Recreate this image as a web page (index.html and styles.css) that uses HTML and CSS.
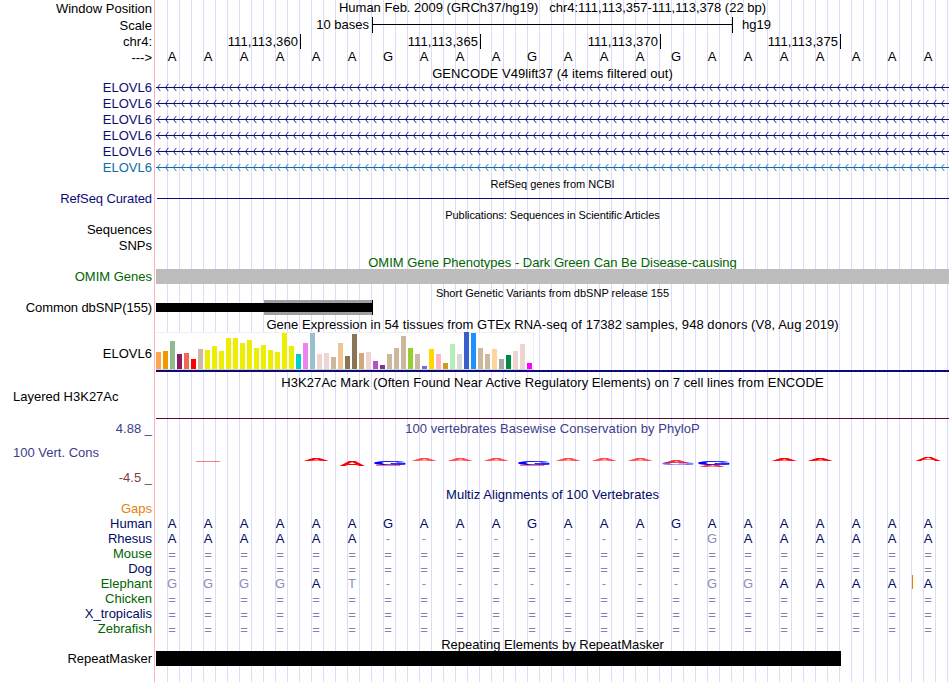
FILE: index.html
```html
<!DOCTYPE html>
<html lang="en">
<head>
<meta charset="utf-8">
<title>Genome Browser</title>
<link rel="stylesheet" href="styles.css">
</head>
<body>
<main class="browser">
  <div class="labels">
    <div class="label gap-1">Window Position</div>
    <div class="label gap-2">Scale</div>
    <div class="label gap-1">chr4:</div>
    <div class="label gap-1">---&gt;</div>
    <div class="genes">
      <div class="label navy">ELOVL6</div>
      <div class="label navy">ELOVL6</div>
      <div class="label navy">ELOVL6</div>
      <div class="label navy">ELOVL6</div>
      <div class="label navy">ELOVL6</div>
      <div class="label blue">ELOVL6</div>
    </div>
    <div class="label navy condensed gap-refseq">RefSeq Curated</div>
    <div class="label gap-16">Sequences</div>
    <div class="label gap-1">SNPs</div>
    <div class="label green gap-16">OMIM Genes</div>
    <div class="label condensed gap-16">Common dbSNP(155)</div>
    <div class="label gap-gtex">ELOVL6</div>
    <div class="label left gap-layered">Layered H3K27Ac</div>
    <div class="label indigo gap-17">4.88 _</div>
    <div class="label indigo left gap-9">100 Vert. Cons</div>
    <div class="label maroon gap-10">-4.5 _</div>
    <div class="label orange gap-16">Gaps</div>
    <div class="label deep">Human</div>
    <div class="label deep">Rhesus</div>
    <div class="label green">Mouse</div>
    <div class="label deep">Dog</div>
    <div class="label green">Elephant</div>
    <div class="label green">Chicken</div>
    <div class="label deep">X_tropicalis</div>
    <div class="label green">Zebrafish</div>
    <div class="label gap-repeat">RepeatMasker</div>
  </div>
  <div class="tracks">
    <div class="title">Human Feb. 2009 (GRCh37/hg19) &nbsp; chr4:111,113,357-111,113,378 (22 bp)</div>
    <div class="scale"><span class="scale-size">10 bases</span><span class="scale-bar"></span><span class="scale-db">hg19</span></div>
    <div class="ruler"><span>111,113,360</span><span>111,113,365</span><span>111,113,370</span><span>111,113,375</span></div>
    <div class="bases" data-seq="AAAAAAGAAAGAAAGAAAAAAA"></div>
    <div class="title spaced gencode-title">GENCODE V49lift37 (4 items filtered out)</div>
    <svg class="transcripts" width="793" height="96">
      <defs>
        <pattern id="chev" x="1" y="-2" width="8" height="16" patternUnits="userSpaceOnUse">
          <path d="M0 8.5H8" stroke="#0c0c78"/><path d="M3.3 5L.5 8.5L3.3 12" fill="none" stroke="#0c0c78" stroke-width=".9"/>
        </pattern>
        <pattern id="chevBlue" x="1" y="-2" width="8" height="16" patternUnits="userSpaceOnUse">
          <path d="M0 8.5H8" stroke="#0c6cac"/><path d="M3.3 5L.5 8.5L3.3 12" fill="none" stroke="#0c6cac" stroke-width=".9"/>
        </pattern>
      </defs>
      <rect width="793" height="78" fill="url(#chev)"/>
      <rect y="78" width="793" height="16" fill="url(#chevBlue)"/>
    </svg>
    <div class="title small refseq-title">RefSeq genes from NCBI</div>
    <div class="refseq-line"></div>
    <div class="title small pubs-title">Publications: Sequences in Scientific Articles</div>
    <div class="title green omim-title">OMIM Gene Phenotypes - Dark Green Can Be Disease-causing</div>
    <div class="omim-bar"></div>
    <div class="title small snp-title">Short Genetic Variants from dbSNP release 155</div>
    <div class="snp"><span class="snp-wide"></span><span class="snp-bar"></span></div>
    <div class="title spaced gtex-title">Gene Expression in 54 tissues from GTEx RNA-seq of 17382 samples, 948 donors (V8, Aug 2019)</div>
    <div class="gtex" id="gtex"></div>
    <div class="gtex-line"></div>
    <div class="title spaced h3k-title">H3K27Ac Mark (Often Found Near Active Regulatory Elements) on 7 cell lines from ENCODE</div>
    <div class="h3k-line"></div>
    <div class="title indigo spaced phylop-title">100 vertebrates Basewise Conservation by PhyloP</div>
    <svg class="logo" id="logo" width="793" height="40"></svg>
    <div class="title deep spaced multiz-title">Multiz Alignments of 100 Vertebrates</div>
    <div class="alignment">
      <div class="bases" data-seq="AAAAAAGAAAGAAAGAAAAAAA"></div>
      <div class="bases" data-seq="AAAAAA---------gAAAAAA"></div>
      <div class="bases" data-seq="======================"></div>
      <div class="bases" data-seq="======================"></div>
      <div class="bases" data-seq="ggggAt---------ggAAAA|"></div>
      <div class="bases" data-seq="======================"></div>
      <div class="bases" data-seq="======================"></div>
      <div class="bases" data-seq="======================"></div>
    </div>
    <div class="title repeat-title">Repeating Elements by RepeatMasker</div>
    <div class="repeat-bar"></div>
  </div>
</main>
<script src="script.js"></script>
</body>
</html>
```
FILE: styles.css
```css
body {
  margin: 0;
  background: #fff;
  color: #000;
  font: 13px/15px "Liberation Sans", Arial, sans-serif;
  overflow: hidden;
}
.browser { display: flex; width: 949px; height: 682px; }
.labels {
  box-sizing: border-box;
  width: 155px;
  flex: none;
  padding-right: 2px;
  border-right: 1px solid #ffb4b4;
  text-align: right;
}
.label { height: 15px; white-space: nowrap; }
.labels, .tracks { display: flex; flex-direction: column; }
.left { text-align: left; padding-left: 13px; }
.condensed { letter-spacing: -.1px; }
.spaced { letter-spacing: .055px; }
.gap-1 { margin-top: 1px; }
.gap-2 { margin-top: 2px; }
.gap-9 { margin-top: 9px; }
.gap-10 { margin-top: 10px; }
.gap-16 { margin-top: 16px; }
.gap-17 { margin-top: 17px; }
.genes { display: flex; flex-direction: column; gap: 1px; margin-top: 15px; }
.gap-refseq { margin-top: 16px; }
.gap-gtex { margin-top: 31px; }
.gap-layered { margin-top: 28px; }
.gap-repeat { margin-top: 15px; }
.navy { color: #0c0c78; }
.blue { color: #0c6cac; }
.green { color: #006400; }
.indigo { color: #3c3c8c; }
.maroon { color: #823c3c; }
.orange { color: #e6820a; }
.deep { color: #000a64; }

.tracks {
  width: 793px;
  margin-left: 1px;
  background: repeating-linear-gradient(to right, transparent 0 11px, #dcdcfa 11px 12px);
}
.tracks > * { flex: none; }
.title { height: 15px; text-align: center; white-space: nowrap; }
.small { height: 12px; font-size: 11px; line-height: 12px; }
.scale { display: flex; height: 16px; margin-top: 2px; }
.scale-size { width: 213px; margin-right: 3px; text-align: right; }
.scale-bar {
  box-sizing: border-box;
  width: 361px;
  border: solid #000;
  border-width: 0 1px;
  background: linear-gradient(#000, #000) 0 7px / 100% 1px no-repeat;
}
.scale-db { margin-left: 9px; }
.ruler { display: flex; height: 15px; margin-top: 1px; letter-spacing: .08px; }
.ruler span {
  box-sizing: border-box;
  width: 180px;
  padding-right: 2px;
  border-right: 1px solid #000;
  text-align: right;
}
.ruler span:first-child { width: 145px; }
.bases { display: flex; height: 15px; margin-left: -2px; }
.bases span { width: 36px; flex: none; text-align: center; }
.gencode-title { margin-top: 2px; }
.transcripts { display: block; }
.refseq-title { margin-top: 1px; }
.refseq-line { height: 1px; margin: 8px 0 0 1px; background: #0c0c78; }
.pubs-title { margin-top: 10px; letter-spacing: -.07px; }
.omim-title { height: 14px; margin-top: 34px; }
.omim-bar { height: 15px; background: #bdbdbd; }
.snp-title { margin-top: 3px; }
.snp { display: grid; width: 217px; height: 15px; margin-top: 1px; align-items: center; }
.snp span { grid-area: 1 / 1; }
.snp-wide { box-sizing: border-box; height: 15px; margin-left: 108px; background: #a0a0a0; border-right: 1px solid #000; }
.snp-bar { height: 9px; background: #000; }
.gtex-title { margin-top: 2px; }
.gtex {
  box-sizing: border-box;
  display: flex;
  align-items: flex-end;
  gap: 2px;
  width: 378px;
  height: 38px;
  background: #fff;
  border-bottom: 1px solid #d2d2d2;
  box-shadow: inset -1px 0 #f0f0f0, inset 0 1px #f0f0f0;
}
.gtex span { width: 5px; flex: none; }
.gtex-line { height: 2px; background: #0c0c78; }
.h3k-title { margin-top: 3px; }
.h3k-line { height: 1px; margin-top: 28px; background: #5a0a32; }
.phylop-title { margin-top: 2px; }
.logo { display: block; font-weight: bold; }
.logo .adenine { fill: #f00; }
.logo .guanine { fill: #00f; stroke: #00f; stroke-width: .4px; }
.multiz-title { margin-top: 11px; }
.alignment { margin-top: 14px; color: #000a64; }
.alignment .mismatch { color: #8c8cb9; }
.alignment .unaligned { color: #8282af; position: relative; top: 1px; }
.alignment .insert { position: relative; }
.alignment .insert::before {
  content: "";
  position: absolute;
  left: 2px;
  top: -1px;
  width: 1px;
  height: 14px;
  background: #e6820a;
}
.repeat-title { height: 14px; margin-top: 1px; }
.repeat-bar { width: 685px; height: 15px; background: #000; }
```
FILE: script.js
```js
// Sequence rows: lower case marks a mismatch, "|" an A preceded by an insertion.
document.querySelectorAll('.bases').forEach(row => {
  for (const c of row.dataset.seq) {
    const s = document.createElement('span');
    s.textContent = c === '|' ? 'A' : c.toUpperCase();
    if (c === '=') s.className = 'unaligned';
    else if (c === '-' || /[a-z]/.test(c)) s.className = 'mismatch';
    else if (c === '|') s.className = 'insert';
    row.append(s);
  }
});

// GTEx tissues: [bar height in px, tissue colour]
const Y = '#eeee00', T = '#cdb79e', P = '#eed5d2', B = '#8b7355';
const tissues = [
  [17, '#ffa54f'], [18, '#ee9a00'], [28, '#8fbc8f'], [15, '#8b1c62'], [16, '#ee6a50'], [10, '#ff0000'], [20, T],
  [19, Y], [23, Y], [18, Y], [31, Y], [31, Y], [26, Y], [29, Y], [21, Y], [24, Y], [19, Y], [17, Y], [36, Y], [23, Y],
  [15, '#00cdcd'], [26, '#ee82ee'], [36, '#9ac0cd'], [15, P], [16, P], [12, T], [26, '#eec591'], [13, B], [35, B],
  [16, '#cdaa7d'], [17, P], [8, '#b452cd'], [4, '#7a378b'], [15, T], [21, T], [33, T], [21, '#9acd32'], [15, T],
  [3, '#7a67ee'], [20, '#ffd700'], [15, '#ffb6c1'], [6, '#cd9b1d'], [25, '#b4eeb4'], [15, '#d9d9d9'],
  [37, '#3a5fcd'], [36, '#1e90ff'], [21, T], [15, T], [20, '#ffd39b'], [10, '#a6a6a6'], [14, '#008b45'],
  [18, P], [25, P], [6, '#ff00ff']
];
const gtex = document.getElementById('gtex');
for (const [h, colour] of tissues) {
  const bar = document.createElement('span');
  bar.style.height = h + 'px';
  bar.style.background = colour;
  gtex.append(bar);
}

// Conservation logo: [base index, letter, top, bottom, opacity], px inside the track.
// Scores too close to zero for a letter are drawn as a flat line ("_").
const logo = document.getElementById('logo');
const letters = [
  [1, '_', 25, 26, .5], [4, 'A', 22, 25, 1], [5, 'A', 25, 29.5, 1], [6, '_', 29, 30, .5], [6, 'G', 25, 29, 1],
  [7, 'A', 23, 25, .7], [8, 'A', 23, 25, .7], [9, 'A', 23, 25, .7], [10, '_', 29, 30, .5], [10, 'G', 25, 29, 1],
  [11, 'A', 23, 25, .7], [12, 'A', 23, 25, .7], [13, 'A', 23, 25, .7], [14, 'G', 26.5, 29, .6], [14, 'A', 25, 27, .8],
  [15, 'A', 29, 31, .8], [15, 'G', 25, 29, 1], [17, 'A', 22, 25, 1], [18, 'A', 22, 25, 1], [21, 'A', 21, 25, 1]
];
for (const [i, letter, top, bottom, opacity] of letters) {
  const flat = letter === '_';
  const el = document.createElementNS('http://www.w3.org/2000/svg', flat ? 'rect' : 'text');
  const guanine = letter === 'G';
  el.setAttribute('class', guanine ? 'guanine' : 'adenine');
  el.setAttribute('opacity', opacity);
  if (flat) {
    el.setAttribute('x', 36 * i + 4);
    el.setAttribute('y', top);
    el.setAttribute('width', 24);
    el.setAttribute('height', bottom - top);
  } else {
    const x = 36 * i + (guanine ? 1 : 2.7);
    el.setAttribute('transform', `translate(${x} ${bottom}) scale(${guanine ? 3.4 : 2.88} ${(bottom - top) / 8.95})`);
    el.textContent = letter;
  }
  logo.append(el);
}
```
